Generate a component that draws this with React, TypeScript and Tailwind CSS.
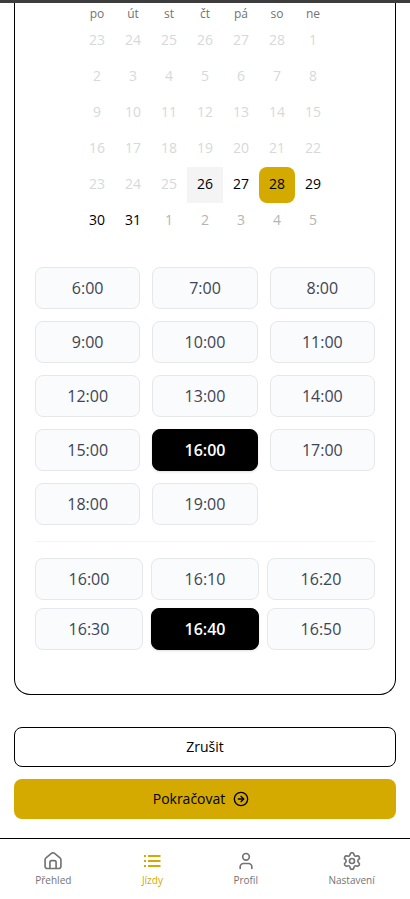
import { useState } from 'react';
import { CircleArrowRight, Settings, User } from 'lucide-react';
import clsx from 'clsx';

const weekdays = ['po', 'út', 'st', 'čt', 'pá', 'so', 'ne'];

const weeks = [
  [23, 24, 25, 26, 27, 28, 1],
  [2, 3, 4, 5, 6, 7, 8],
  [9, 10, 11, 12, 13, 14, 15],
  [16, 17, 18, 19, 20, 21, 22],
  [23, 24, 25, 26, 27, 28, 29],
  [30, 31, 1, 2, 3, 4, 5],
];

const today = 26;

const hours = [
  '6:00', '7:00', '8:00', '9:00', '10:00', '11:00', '12:00',
  '13:00', '14:00', '15:00', '16:00', '17:00', '18:00', '19:00',
];

const minutes = ['00', '10', '20', '30', '40', '50'];

function HomeIcon() {
  return (
    <svg
      viewBox="0 0 24 24"
      className="size-5"
      fill="none"
      stroke="currentColor"
      strokeWidth="2"
      strokeLinecap="round"
      strokeLinejoin="round"
      aria-hidden="true"
    >
      <path d="M2.500 10.500a3 3 0 0 1 1.100-2.300l6.500-5.300a3 3 0 0 1 3.800 0l6.500 5.300a3 3 0 0 1 1.100 2.300V18.500a2.500 2.500 0 0 1-2.500 2.500H5a2.500 2.500 0 0 1-2.500-2.500z" />
      <path d="M8.300 21v-7.500a2 2 0 0 1 2-2h3.400a2 2 0 0 1 2 2V21" />
    </svg>
  );
}

function ListIcon() {
  return (
    <svg viewBox="0 0 20 20" className="size-5" fill="none" stroke="currentColor" strokeWidth="2" aria-hidden="true">
      <path d="M2 5h2M2 10h2M2 15h2" />
      <path d="M6 5h12.500M6 10h12.500M6 15h12.500" />
    </svg>
  );
}

type DayProps = {
  day: number;
  week: number;
  selected: boolean;
  onSelect: (day: number) => void;
};

function Day({ day, week, selected, onSelect }: DayProps) {
  const before = week === 0 && day > 7;
  const after = week === 5 && day < 8;
  const disabled = before || (!after && day < today);

  return (
    <button
      type="button"
      disabled={disabled}
      aria-pressed={selected}
      onClick={() => !after && onSelect(day)}
      className={clsx(
        'block size-9 pb-0.5 text-sm',
        disabled && 'text-[#d8d8d8]',
        after && 'text-[#b4b4b4]',
        !disabled && !after && 'text-black',
        selected && 'rounded-lg bg-[#d4aa00]',
        !selected && !disabled && !after && day === today && 'bg-[#f4f4f4]',
      )}
    >
      {day}
    </button>
  );
}

type SlotProps = {
  label: string;
  selected: boolean;
  onSelect: () => void;
};

function Slot({ label, selected, onSelect }: SlotProps) {
  return (
    <button
      type="button"
      aria-pressed={selected}
      onClick={onSelect}
      className={clsx(
        'rounded-lg border py-2 text-base leading-6',
        selected
          ? 'border-black bg-black font-semibold text-white shadow-sm'
          : 'border-gray-200 bg-[#f9fbfc] text-[#3f4454]',
      )}
    >
      {label}
    </button>
  );
}

export default function App() {
  const [day, setDay] = useState(28);
  const [hour, setHour] = useState('16:00');
  const [minute, setMinute] = useState('40');

  return (
    <div className="flex min-h-screen flex-col border-t-[3px] border-[#3d3d3d] bg-white font-['Open_Sans','Noto_Sans',sans-serif] text-black">
      <main className="flex-1 px-[14px] pb-[19px]">
        <section className="rounded-b-2xl border border-t-0 border-black px-5 pb-11">
          <table className="mx-auto">
            <thead>
              <tr>
                {weekdays.map((name) => (
                  <th key={name} scope="col" className="h-5 p-0 pt-0.5 text-xs font-normal text-[#737373]">
                    {name}
                  </th>
                ))}
              </tr>
            </thead>
            <tbody>
              {weeks.map((days, week) => (
                <tr key={week}>
                  {days.map((d) => (
                    <td key={d} className="p-0">
                      <Day
                        day={d}
                        week={week}
                        selected={week > 3 && d === day}
                        onSelect={setDay}
                      />
                    </td>
                  ))}
                </tr>
              ))}
            </tbody>
          </table>

          <div className="mt-7 grid grid-cols-3 gap-3">
            {hours.map((h) => (
              <Slot key={h} label={h} selected={h === hour} onSelect={() => setHour(h)} />
            ))}
          </div>

          <div className="mt-4 grid grid-cols-3 gap-2 border-t border-gray-100 pt-4">
            {minutes.map((m) => (
              <Slot
                key={m}
                label={`${hour.split(':')[0]}:${m}`}
                selected={m === minute}
                onSelect={() => setMinute(m)}
              />
            ))}
          </div>
        </section>

        <div className="mt-8 flex flex-col gap-3">
          <button type="button" className="h-10 rounded-lg border border-black text-sm">
            Zrušit
          </button>
          <button
            type="button"
            className="flex h-10 items-center justify-center rounded-lg bg-[#d4aa00] text-sm"
          >
            Pokračovat
            <CircleArrowRight className="mx-2 size-4" />
          </button>
        </div>
      </main>

      <nav className="flex justify-around border-t border-black py-3 text-[10px] leading-4 text-[#737373]">
        <a href="#prehled" className="flex flex-col items-center gap-px">
          <HomeIcon />
          Přehled
        </a>
        <a href="#jizdy" className="flex flex-col items-center gap-px text-[#d4aa00]" aria-current="page">
          <ListIcon />
          Jízdy
        </a>
        <a href="#profil" className="flex flex-col items-center gap-px">
          <User className="size-5" />
          Profil
        </a>
        <a href="#nastaveni" className="flex flex-col items-center gap-px">
          <Settings className="size-5" />
          Nastavení
        </a>
      </nav>
    </div>
  );
}
